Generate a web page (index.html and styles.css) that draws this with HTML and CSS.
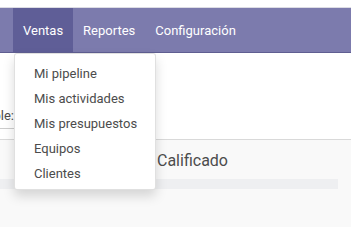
FILE: index.html
```html
<!DOCTYPE html>
<html lang="es">
<head>
<meta charset="utf-8">
<link rel="stylesheet" href="styles.css">
</head>
<body>
<div class="topstrip"></div>
<nav class="navbar">
  <div class="nav-item dropdown-host">
    <span class="nav-link active">Ventas</span>
    <ul class="dropdown">
      <li>Mi pipeline</li>
      <li>Mis actividades</li>
      <li>Mis presupuestos</li>
      <li>Equipos</li>
      <li>Clientes</li>
    </ul>
  </div>
  <div class="nav-item"><span class="nav-link">Reportes</span></div>
  <div class="nav-item"><span class="nav-link">Configuración</span></div>
</nav>
<div class="control-panel">
  <div class="search">
    <span class="search-text">Responsable:</span>
  </div>
</div>
<div class="kanban">
  <div class="column">
    <div class="col-title">Calificado</div>
    <div class="col-bar"></div>
  </div>
</div>
</body>
</html>
```
FILE: styles.css
```css
html, body {
  margin: 0;
  padding: 0;
  background: #f9f9f9;
  font-family: Roboto, "Liberation Sans", sans-serif;
  font-size: 13px;
  overflow: hidden;
  height: 227px;
}
.topstrip {
  height: 7px;
  background: #ffffff;
  border-bottom: 1px solid #dcdce4;
}
.navbar {
  display: flex;
  height: 44px;
  background: #7c7bad;
  border-bottom: 1px solid #5f5e91;
  padding-left: 13px;
}
.nav-item {
  display: flex;
  position: relative;
}
.nav-link {
  display: flex;
  align-items: center;
  padding: 0 10px;
  color: #ffffff;
  font-size: 13px;
}
.nav-link.active {
  background: #5f5e97;
}
.dropdown {
  position: absolute;
  top: 45px;
  left: 1px;
  width: 140px;
  margin: 0;
  padding: 7px 0 3px;
  list-style: none;
  background: #ffffff;
  border: 1px solid rgba(0, 0, 0, 0.12);
  border-radius: 3px;
  box-shadow: 0 6px 12px rgba(0, 0, 0, 0.15);
  z-index: 10;
}
.dropdown li {
  height: 25px;
  line-height: 25px;
  padding-left: 19px;
  color: #4c4c4c;
  font-size: 13px;
  white-space: nowrap;
}
.control-panel {
  height: 86px;
  background: #ffffff;
  border-bottom: 1px solid #d9d9d9;
  display: flex;
  align-items: flex-start;
}
.search {
  margin-top: 52px;
  width: 14px;
  height: 23px;
  border-bottom: 1px solid #cccccc;
  overflow: hidden;
  position: relative;
}
.search-text {
  position: absolute;
  right: 0;
  top: 3px;
  font-size: 13px;
  color: #4c4c4c;
  white-space: nowrap;
}
.kanban {
  display: flex;
  padding: 0;
}
.column {
  width: 338px;
  display: flex;
  flex-direction: column;
}
.col-title {
  padding: 11px 0 0 157px;
  height: 19px;
  line-height: 19px;
  font-size: 16px;
  color: #4c4c4c;
}
.col-bar {
  margin-top: 9px;
  height: 10px;
  background: #eeeff1;
}
```
